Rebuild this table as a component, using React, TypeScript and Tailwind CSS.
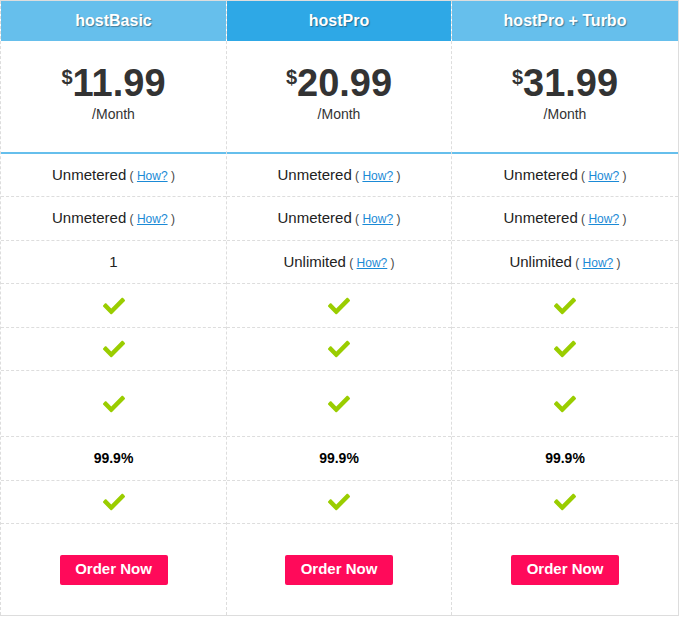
import { FaCheck } from "react-icons/fa";

type Plan = {
  name: string;
  price: string;
  head: string;
  domains: string;
  domainsHow: boolean;
};

const plans: Plan[] = [
  { name: "hostBasic", price: "11.99", head: "bg-[#66bfec]", domains: "1", domainsHow: false },
  { name: "hostPro", price: "20.99", head: "bg-[#2ea8e6]", domains: "Unlimited", domainsHow: true },
  { name: "hostPro + Turbo", price: "31.99", head: "bg-[#66bfec]", domains: "Unlimited", domainsHow: true },
];

const colWidths = ["w-[226px]", "w-[225px]", "w-[227px]"];

const Check = () => <FaCheck size={22} className="text-[#9acd00]" />;

const How = () => (
  <span className="text-[12px] text-[#444]">
    {" "}( <a href="#" className="text-[#1b8ad6] underline">How?</a> )
  </span>
);

const Cell = ({ h, children }: { h: string; children: React.ReactNode }) => (
  <div className={`${h} flex items-center justify-center border-b border-dashed border-[#ddd]`}>
    {children}
  </div>
);

const Column = ({ plan, width }: { plan: Plan; width: string }) => (
  <div className={`${width} flex flex-col border-l border-dashed border-[#ddd]`}>
    {/* Header */}
    <div
      className={`${plan.head} h-[40px] flex items-center justify-center text-white font-bold text-[16px] [text-shadow:1px_1px_1px_rgba(0,0,0,0.35)]`}
    >
      {plan.name}
    </div>

    {/* Price */}
    <div className="h-[113px] border-b-2 border-[#66bfec] flex flex-col items-center pt-[23px] text-[#333]">
      <div className="flex items-start">
        <span className="text-[20px] font-bold leading-none mt-[3px]">$</span>
        <span className="text-[38px] font-bold leading-none">{plan.price}</span>
      </div>
      <div className="text-[14px] leading-5 mt-[2px]">/Month</div>
    </div>

    {/* Features */}
    <div className="text-[15px] text-[#222] flex flex-col flex-1">
      <Cell h="h-[43px]">
        <span>Unmetered<How /></span>
      </Cell>
      <Cell h="h-[44px]">
        <span>Unmetered<How /></span>
      </Cell>
      <Cell h="h-[43px]">
        <span>
          {plan.domains}
          {plan.domainsHow && <How />}
        </span>
      </Cell>
      <Cell h="h-[44px]">
        <Check />
      </Cell>
      <Cell h="h-[43px]">
        <Check />
      </Cell>
      <Cell h="h-[66px]">
        <Check />
      </Cell>
      <Cell h="h-[44px]">
        <span className="font-bold text-black text-[14px]">99.9%</span>
      </Cell>
      <Cell h="h-[43px]">
        <Check />
      </Cell>
      <div className="flex-1 flex items-center justify-center">
        <a
          href="#"
          className="w-[108px] h-[30px] flex items-center justify-center rounded-[2px] bg-[#ff0a5a] text-white font-bold text-[15px]"
        >
          Order Now
        </a>
      </div>
    </div>
  </div>
);

export default function App() {
  return (
    <div className="w-[680px] h-[617px] bg-white" style={{ fontFamily: '"Liberation Sans", Arial, sans-serif' }}>
      <div className="w-[679px] h-[616px] flex border-t border-r border-b border-[#ddd]">
        {plans.map((plan, i) => (
          <Column key={plan.name} plan={plan} width={colWidths[i]} />
        ))}
      </div>
    </div>
  );
}
